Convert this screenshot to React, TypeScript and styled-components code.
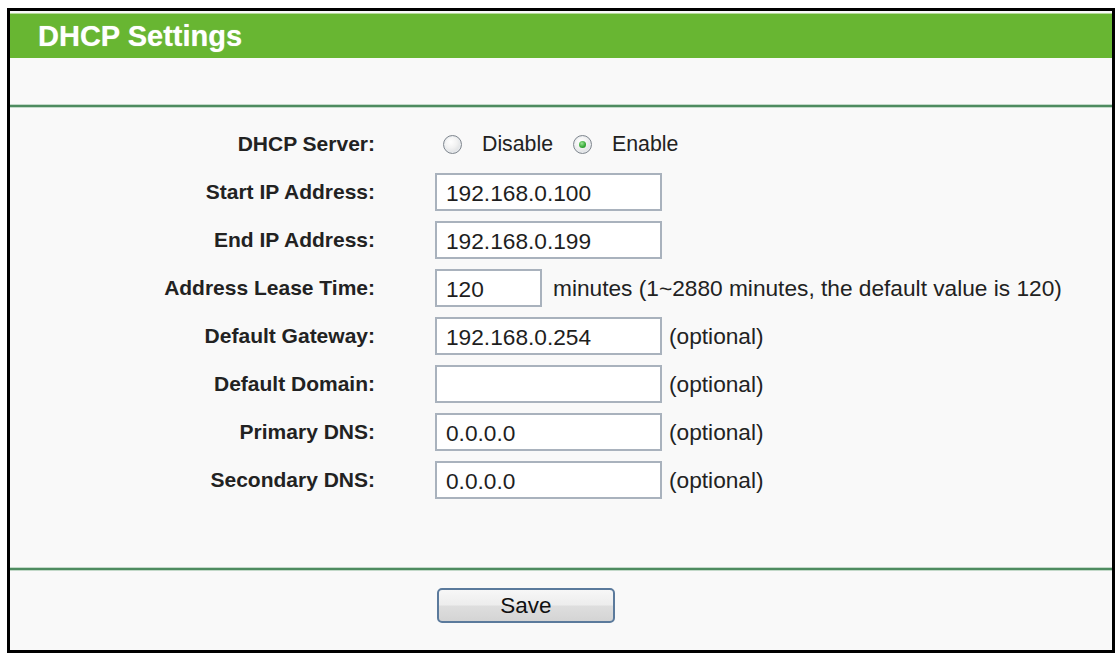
import styled, { createGlobalStyle } from 'styled-components'

const GlobalStyle = createGlobalStyle`
  html, body {
    margin: 0;
    padding: 0;
    background: #ffffff;
    font-family: "Liberation Sans", Arial, sans-serif;
  }
`

interface IField {
  label: string;
  value: string;
  width?: number;
  note?: string;
  noteGap?: number;
}

const fields: IField[] = [
  { label: 'Start IP Address:', value: '192.168.0.100' },
  { label: 'End IP Address:', value: '192.168.0.199' },
  { label: 'Address Lease Time:', value: '120', width: 107, note: 'minutes (1~2880 minutes, the default value is 120)', noteGap: 11 },
  { label: 'Default Gateway:', value: '192.168.0.254', note: '(optional)' },
  { label: 'Default Domain:', value: '', note: '(optional)' },
  { label: 'Primary DNS:', value: '0.0.0.0', note: '(optional)' },
  { label: 'Secondary DNS:', value: '0.0.0.0', note: '(optional)' },
]

export default function App(): JSX.Element {
  return (<Page>
    <GlobalStyle />
    <Frame>
      <TitleBar>DHCP Settings</TitleBar>
      <Spacer />
      <Rule />
      <Form>
        <Label>DHCP Server:</Label>
        <Value>
          <Radio />
          <RadioText>Disable</RadioText>
          <Radio $checked />
          <RadioText>Enable</RadioText>
        </Value>
        {fields.map((f) => (
          <FieldRow key={f.label}>
            <Label>{f.label}</Label>
            <Value>
              <TextBox $width={f.width ?? 227}>{f.value}</TextBox>
              {f.note && <Note $gap={f.noteGap ?? 7}>{f.note}</Note>}
            </Value>
          </FieldRow>
        ))}
      </Form>
      <Rule />
      <Footer>
        <SaveButton>Save</SaveButton>
      </Footer>
    </Frame>
  </Page>)
}

const Page = styled.div`
  padding: 8px 0 0 7px;
`

const Frame = styled.div`
  width: 1102px;
  border: 3px solid #000;
  background: #f9f9f9;
  padding-top: 2px;
  display: flex;
  flex-direction: column;
`

const TitleBar = styled.div`
  height: 44px;
  border-top: 1px solid #b7dc9a;
  background: #68b632;
  color: #fff;
  font-size: 29px;
  font-weight: bold;
  line-height: 44px;
  padding-left: 28px;
  text-shadow: 0 0 1px rgba(255, 255, 255, 0.6);
`

const Spacer = styled.div`
  height: 47px;
`

const Rule = styled.div`
  height: 2px;
  background: #4e8b60;
  box-shadow: 0 1px 0 #c3d9c9, 0 -1px 0 #c3d9c9;
`

const Form = styled.div`
  display: grid;
  grid-template-columns: 365px 1fr;
  grid-auto-rows: 48px;
  column-gap: 60px;
  padding: 13px 0 64px;
`

const FieldRow = styled.div`
  display: contents;
`

const Label = styled.div`
  display: flex;
  align-items: center;
  justify-content: flex-end;
  font-size: 21px;
  font-weight: bold;
  color: #222;
`

const Value = styled.div`
  display: flex;
  align-items: center;
  color: #222;
`

const Radio = styled.span<{ $checked?: boolean }>`
  box-sizing: border-box;
  width: 19px;
  height: 19px;
  border-radius: 50%;
  border: 1px solid #7f868e;
  background: radial-gradient(circle at 40% 35%, #ffffff 0%, #f2f2f2 40%, #cfd3d8 100%);
  box-shadow: inset 0 0 0 1px #e9ecef;
  margin: 0 20px 0 8px;
  display: flex;
  align-items: center;
  justify-content: center;

  &::after {
    content: '';
    display: ${({ $checked }) => ($checked ? 'block' : 'none')};
    width: 7px;
    height: 7px;
    border-radius: 50%;
    background: radial-gradient(circle at 40% 35%, #9be496 0%, #34a834 60%, #1e7d24 100%);
  }
`

const RadioText = styled.span`
  font-size: 21.3px;
  margin-right: 12px;
`

const TextBox = styled.div<{ $width: number }>`
  box-sizing: border-box;
  width: ${({ $width }) => $width}px;
  height: 38px;
  border: 2px solid #a9b2bd;
  background: #fff;
  padding-left: 9px;
  padding-top: 1px;
  font-size: 22.7px;
  line-height: 34px;
  color: #1e1e1e;
`

const Note = styled.span<{ $gap: number }>`
  margin-left: ${({ $gap }) => $gap}px;
  font-size: 22.7px;
  color: #222;
`

const Footer = styled.div`
  display: grid;
  grid-template-columns: 365px 1fr;
  column-gap: 62px;
  padding: 18px 0 27px 0;
`

const SaveButton = styled.button`
  grid-column: 2;
  justify-self: start;
  width: 178px;
  height: 35px;
  border: 2px solid #5b7a9c;
  border-radius: 5px;
  background: linear-gradient(#f7f7f7 0%, #ededed 48%, #dedede 52%, #d4d4d4 100%);
  font-family: "Liberation Sans", Arial, sans-serif;
  font-size: 22.5px;
  color: #111;
  padding: 0;
`
